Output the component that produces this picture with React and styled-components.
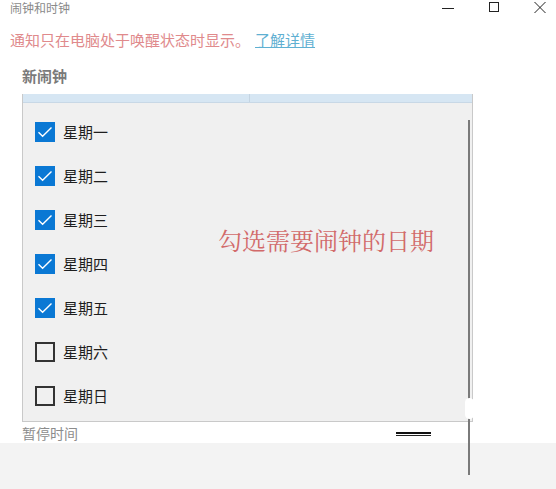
import styled, { createGlobalStyle } from 'styled-components';

const Global = createGlobalStyle`
  html, body { margin: 0; padding: 0; background: #fff; }
  body { font-family: "Noto Sans CJK SC", "Noto Sans", sans-serif; }
`;

const Page = styled.div`
  position: relative;
  width: 556px;
  height: 489px;
  overflow: hidden;
  background: #fff;
  display: flex;
  flex-direction: column;
`;

const TitleBar = styled.div`
  height: 18px;
  display: flex;
  align-items: center;
  justify-content: space-between;
  padding-left: 10px;
`;

const Title = styled.span`
  font-size: 12px;
  color: #8a8a8a;
  line-height: 16px;
  margin-top: -2px;
`;

const Controls = styled.div`
  display: flex;
  align-items: center;
  gap: 32px;
  padding-right: 9px;
  height: 16px;
  margin-top: -4px;
`;

const Ctl = styled.svg`
  width: 14px;
  height: 12px;
  display: block;
`;

const Notice = styled.div`
  padding: 12px 0 0 10px;
  font-size: 15px;
  line-height: 20px;
  color: #e08a8c;
`;

const Link = styled.a`
  color: #5fb0d2;
  text-decoration: underline;
  margin-left: 5px;
`;

const Section = styled.div`
  padding: 0 0 0 22px;
`;

const Heading = styled.div`
  font-size: 15px;
  font-weight: bold;
  color: #7a7a7a;
  line-height: 20px;
  margin: 16px 0 8px;
`;

const Panel = styled.div`
  width: 449px;
  height: 327px;
  border: 1px solid #c9c9c9;
  border-top: none;
  background: #f0f0f0;
  display: flex;
  flex-direction: column;
`;

const HeaderStrip = styled.div`
  height: 8px;
  display: flex;
  background: #d6e6f3;
  border-bottom: 1px solid #c8d8e6;
`;

const HeaderCell = styled.div`
  width: ${p => p.w}px;
  border-right: ${p => (p.divider ? '1px solid #c4d4e2' : 'none')};
`;

const Body = styled.div`
  display: flex;
  flex: 1;
`;

const List = styled.div`
  display: flex;
  flex-direction: column;
  padding: 19px 0 0 12px;
  gap: 24px;
  width: 183px;
`;

const Row = styled.div`
  display: flex;
  align-items: center;
  height: 20px;
  gap: 8px;
`;

const Box = styled.div`
  width: 20px;
  height: 20px;
  box-sizing: border-box;
  background: ${p => (p.checked ? '#0a78d4' : 'transparent')};
  border: ${p => (p.checked ? 'none' : '2px solid #333')};
  display: flex;
  align-items: center;
  justify-content: center;
`;

const Label = styled.span`
  font-size: 15px;
  color: #1e1e1e;
  line-height: 20px;
`;

const Hint = styled.div`
  margin: 123px 0 0 0;
  font-family: "Noto Serif CJK SC", "Noto Sans CJK SC", serif;
  font-size: 24px;
  color: #d26a6a;
  line-height: 28px;
`;

const Footer = styled.div`
  display: flex;
  align-items: center;
  height: 21px;
  padding-left: 22px;
`;

const FooterLabel = styled.span`
  font-size: 14px;
  color: #8c8c8c;
  line-height: 20px;
`;

const Dash = styled.div`
  margin-left: 318px;
  width: 35px;
  height: 1px;
  border-top: 2px solid #111;
  border-bottom: 1px solid #222;
  margin-top: 2px;
`;

const Bottom = styled.div`
  flex: 1;
  background: #f3f3f3;
`;

const ScrollLine = styled.div`
  position: absolute;
  left: 468px;
  top: 120px;
  width: 2px;
  height: 355px;
  background: #7a7a7a;
`;

const Thumb = styled.div`
  position: absolute;
  left: 465px;
  top: 398px;
  width: 9px;
  height: 21px;
  border-radius: 5px;
  background: #fff;
`;

const days = [
  ['星期一', true],
  ['星期二', true],
  ['星期三', true],
  ['星期四', true],
  ['星期五', true],
  ['星期六', false],
  ['星期日', false],
];

const Check = () => (
  <svg width="16" height="12" viewBox="0 0 16 12">
    <path d="M1.5 6.2 L5.6 10.2 L14.5 1.5" fill="none" stroke="#fff" strokeWidth="1.4" />
  </svg>
);

export default function App() {
  return (
    <Page>
      <Global />
      <TitleBar>
        <Title>闹钟和时钟</Title>
        <Controls>
          <Ctl viewBox="0 0 14 12"><path d="M1 7.5 H13" stroke="#222" strokeWidth="1" /></Ctl>
          <Ctl viewBox="0 0 14 12"><rect x="2.5" y="1.5" width="9" height="9" fill="none" stroke="#222" strokeWidth="1" /></Ctl>
          <Ctl viewBox="0 0 14 12"><path d="M1.5 1 L12.5 12 M12.5 1 L1.5 12" stroke="#222" strokeWidth="1" /></Ctl>
        </Controls>
      </TitleBar>
      <Notice>
        通知只在电脑处于唤醒状态时显示。<Link>了解详情</Link>
      </Notice>
      <Section>
        <Heading>新闹钟</Heading>
        <Panel>
          <HeaderStrip>
            <HeaderCell w={226} divider />
            <HeaderCell w={222} />
          </HeaderStrip>
          <Body>
            <List>
              {days.map(([d, c]) => (
                <Row key={d}>
                  <Box checked={c}>{c && <Check />}</Box>
                  <Label>{d}</Label>
                </Row>
              ))}
            </List>
            <Hint>勾选需要闹钟的日期</Hint>
          </Body>
        </Panel>
      </Section>
      <Footer>
        <FooterLabel>暂停时间</FooterLabel>
        <Dash />
      </Footer>
      <Bottom />
      <ScrollLine />
      <Thumb />
    </Page>
  );
}
